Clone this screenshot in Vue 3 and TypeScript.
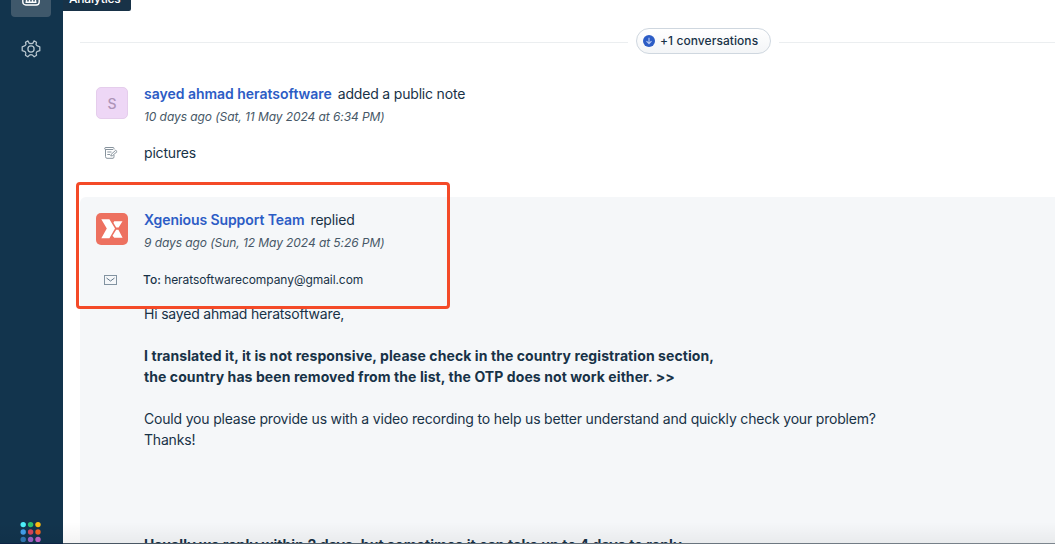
<script setup lang="ts">
const appDots: string[] = [
  '#4df0fa', '#2cc070', '#fdbd10',
  '#42a0ec', '#d6455b', '#f26322',
  '#2f78b5', '#9b62c8', '#c263c8',
]
</script>

<template>
  <div class="app">
    <nav class="sidebar">
      <div class="nav-item active">
        <svg width="18" height="16" viewBox="0 0 18 16" fill="none" stroke="#fff" stroke-width="1.4">
          <rect x="0.8" y="0.8" width="16.4" height="14.2" rx="3" />
          <path d="M4.5 12V7M7.5 12V4M10.5 12V6M13.5 12V4M3.5 12.2H14.5" />
        </svg>
      </div>
      <svg class="gear" width="20" height="20" viewBox="0 0 20 20" fill="none" stroke="#b9c7d0" stroke-width="1.25" stroke-linejoin="round">
        <circle cx="10" cy="10" r="3.1" />
        <path d="M8 4.1 7 1.9 4.5 3.3 5 5.5Q4.4 6.8 3 7.2L1.2 7.8V11.7L3.4 12.3Q4.9 13 4.8 14.4L4.4 16.2 6.8 17.8 8.5 16.1Q10 15.2 11.5 16.1L13.2 17.8 15.6 16.2 15.2 14.4Q15.1 13 16.6 12.3L18.8 11.7V7.8L17 7.2Q15.6 6.8 15 5.5L15.5 3.3 13 1.9 12 4.1Q10 5.1 8 4.1Z" />
      </svg>
      <svg class="apps" width="20" height="20" viewBox="0 0 20 20">
        <circle
          v-for="(color, i) in appDots"
          :key="color"
          :cx="2.2 + (i % 3) * 7.4"
          :cy="2.6 + Math.floor(i / 3) * 7.4"
          r="2.7"
          :fill="color"
        />
      </svg>
    </nav>
    <div class="tooltip">Analytics</div>

    <main class="thread">
      <div class="divider">
        <span class="line left"></span>
        <button class="more">
          <svg width="12" height="12" viewBox="0 0 12 12">
            <circle cx="6" cy="6" r="6" fill="#2c5cc5" />
            <path d="M6 2.8V8.6M3.5 6.2 6 8.7 8.5 6.2" fill="none" stroke="#b8caf3" stroke-width="1.1" />
          </svg>
          <span>+1 conversations</span>
        </button>
        <span class="line right"></span>
      </div>

      <article class="note">
        <div class="head">
          <div class="avatar letter">S</div>
          <div>
            <p class="who"><b>sayed ahmad heratsoftware</b><span>added a public note</span></p>
            <p class="time">10 days ago (Sat, 11 May 2024 at 6:34 PM)</p>
          </div>
        </div>
        <div class="note-body">
          <svg width="14" height="13" viewBox="0 0 14 13" fill="none" stroke="#87939d" stroke-width="1">
            <path d="M10 3.5V2.5Q10 1.5 9 1.5H2Q.6 1.5.6 2.5T2 3.5H9M1.5 3.5V10.5Q1.5 12.3 3 12.3H9Q10 12.3 10 10.5V9M3.3 6H7.5M3.3 8.5H6" />
            <path d="M6.8 10 7.2 8.3 11.7 4.3 13.1 5.6 8.6 9.6Z" />
          </svg>
          <p>pictures</p>
        </div>
      </article>

      <article class="reply">
        <div class="head">
          <svg class="avatar" width="32" height="32" viewBox="0 0 32 32">
            <rect width="32" height="32" rx="5" fill="#ed7160" />
            <path d="M5.3 6.3H13.4L19 15.5 13.4 25.2H5.3L10.8 15.5Z" fill="#fff" />
            <path d="M18.2 8.2H26.5L22.6 14.5H20.2L17.4 9.8ZM20.2 16.8H22.4L26.6 24.8H18.3L16.5 22.8Z" fill="#fff" />
          </svg>
          <div>
            <p class="who team"><b>Xgenious Support Team</b><span>replied</span></p>
            <p class="time">9 days ago (Sun, 12 May 2024 at 5:26 PM)</p>
          </div>
        </div>
        <div class="recipient">
          <svg width="13" height="10" viewBox="0 0 13 10" fill="none" stroke="#8293a1" stroke-width="1">
            <rect x="0.5" y="0.5" width="12" height="9" />
            <path d="M2.5 3 6.5 6 10.5 3" stroke="#627789" />
          </svg>
          <p><b>To:</b> <span>heratsoftwarecompany@gmail.com</span></p>
        </div>
        <div class="message">
          <p>Hi sayed ahmad heratsoftware,</p>
          <p class="strong">I translated it, it is not responsive, please check in the country registration section,<br>the country has been removed from the list, the OTP does not work either. &gt;&gt;</p>
          <p>Could you please provide us with a video recording to help us better understand and quickly check your problem?<br>Thanks!</p>
          <p class="strong final">Usually we reply within 2 days, but sometimes it can take up to 4 days to reply.</p>
        </div>
        <div class="highlight"></div>
      </article>
    </main>
    <div class="bottom-shade"></div>
  </div>
</template>

<style>
body { margin: 0; overflow: hidden; }
</style>

<style scoped>
.app {
  position: relative;
  display: flex;
  width: 1055px;
  height: 544px;
  overflow: hidden;
  background: #fff;
  color: #183247;
  font: 14px/21px Inter, "Liberation Sans", sans-serif;
  letter-spacing: -0.188px;
}
p { margin: 0; white-space: nowrap; }
svg { display: block; flex: none; }
.sidebar {
  display: flex;
  flex-direction: column;
  align-items: center;
  flex: none;
  width: 63px;
  height: 544px;
  background: #12344d;
}
.nav-item {
  box-sizing: border-box;
  display: flex;
  justify-content: center;
  align-items: flex-end;
  width: 40px;
  height: 17px;
  padding-bottom: 11px;
  margin-right: 1px;
  border-radius: 0 0 4px 4px;
  background: #3f586b;
}
.gear { margin: 22px 1px 0 0; }
.apps { margin: auto 1px 2px 0; overflow: visible; }
.tooltip {
  position: absolute;
  left: 63px;
  top: -15px;
  box-sizing: border-box;
  width: 68px;
  height: 26px;
  padding-left: 6px;
  border-radius: 0 0 2px 0;
  background: #183247;
  color: #fff;
  font-size: 12px;
  font-weight: 500;
  line-height: 28px;
}
.thread { width: 975px; margin-left: 17px; flex: none; }
.divider { display: flex; align-items: center; height: 26px; padding-top: 28px; }
.line { height: 1px; margin-top: 2px; background: #ebeef0; }
.left { width: 548px; }
.right { flex: 1; }
.more {
  box-sizing: border-box;
  display: flex;
  align-items: center;
  gap: 5px;
  width: 135px;
  height: 26px;
  margin: 0 8px;
  padding: 0 0 0 6px;
  border: 1px solid #cfd7df;
  border-radius: 13px;
  background: linear-gradient(#fff, #f3f5f7);
  color: #183247;
  font: 500 12px/24px Inter, sans-serif;
  letter-spacing: 0.07px;
  white-space: nowrap;
}
.note { height: 114px; padding: 29px 16px 0; }
.head { display: flex; gap: 16px; }
.avatar { width: 32px; height: 32px; margin-top: 4px; }
.letter {
  box-sizing: border-box;
  border: 1px solid #e5cdec;
  border-radius: 5px;
  background: #eed7f6;
  color: #ae94b8;
  font-weight: 500;
  line-height: 32px;
  text-align: center;
}
.who { display: flex; gap: 6px; }
.who b { color: #2c5cc5; font-weight: 600; letter-spacing: -0.02px; }
.who.team b { letter-spacing: -0.09px; }
.time { margin-top: 2px; color: #475867; font-size: 12px; font-style: italic; letter-spacing: -0.075px; }
.note-body { display: flex; align-items: center; gap: 26px; padding: 15px 0 0 8px; }
.reply {
  position: relative;
  height: 347px;
  border-radius: 6px 0 0 0;
  background: #f5f7f9;
}
.reply .head { padding: 12px 16px 0; }
.recipient { display: flex; align-items: center; gap: 26px; padding: 16px 0 0 24px; font-size: 12px; letter-spacing: 0; }
.recipient b { font-weight: 500; }
.recipient span { letter-spacing: -0.07px; }
.message { padding: 13px 0 0 64px; }
.message p + p { margin-top: 21px; }
.strong { font-weight: 700; letter-spacing: 0.085px; }
.message .final { margin-top: 84px; }
.highlight {
  position: absolute;
  left: -4px;
  top: -15px;
  box-sizing: border-box;
  width: 374px;
  height: 127px;
  border: 3px solid #f44a28;
  border-radius: 4px;
}
.bottom-shade {
  position: absolute;
  left: 0;
  right: 0;
  bottom: 0;
  height: 22px;
  background:
    linear-gradient(90deg, #0c2444 63px, #465461 63px, #7d868e) 0 100% / 100% 1px no-repeat,
    linear-gradient(transparent, rgba(0, 0, 0, 0.05));
}
</style>
